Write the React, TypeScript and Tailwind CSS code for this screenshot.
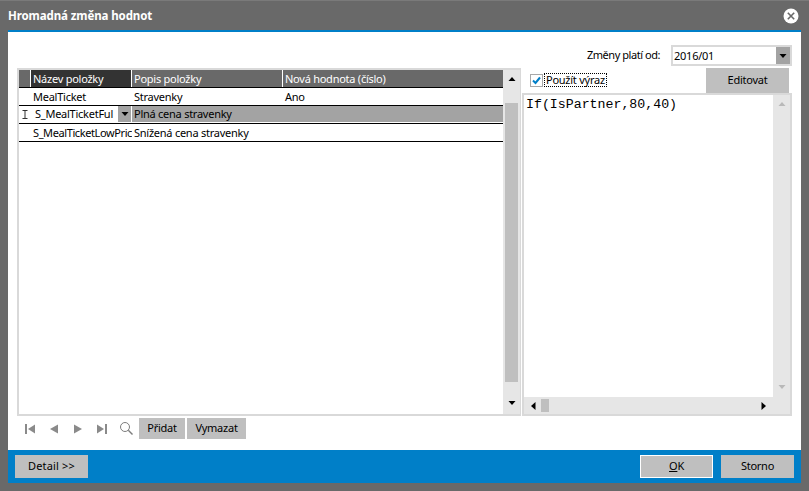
import React from "react";

const font = { fontFamily: '"Noto Sans", sans-serif' };

function Tri({ dir, color = "#000", size = 8 }: { dir: "up" | "down" | "left" | "right"; color?: string; size?: number }) {
  const pts = { up: "0.5,6 7.5,6 4,2", down: "0.5,2 7.5,2 4,6", left: "5.5,0 5.5,8 1,4", right: "1.5,0 1.5,8 6,4" }[dir];
  return (
    <svg width={size} height={size} viewBox="0 0 8 8" className="block shrink-0">
      <polygon points={pts} fill={color} />
    </svg>
  );
}

function Nav() {
  const c = "#8a8a8a";
  return (
    <div className="flex items-center h-[21px] pl-[8px] gap-[14px]">
      <svg width="10" height="10" viewBox="0 0 10 10"><rect x="0" y="0" width="2" height="10" fill={c} /><polygon points="10,0.5 10,9.5 3,5" fill={c} /></svg>
      <svg width="10" height="10" viewBox="0 0 10 10"><polygon points="9,0.5 9,9.5 1,5" fill={c} /></svg>
      <svg width="10" height="10" viewBox="0 0 10 10"><polygon points="1,0.5 1,9.5 9,5" fill={c} /></svg>
      <svg width="10" height="10" viewBox="0 0 10 10"><polygon points="0,0.5 0,9.5 7,5" fill={c} /><rect x="8" y="0" width="2" height="10" fill={c} /></svg>
      <svg width="13" height="13" viewBox="0 0 13 13" className="-ml-[1px]" fill="none" stroke="#7d7d7d"><circle cx="5" cy="5" r="4.5" /><path d="M8.3 8.3l4.2 4.2" strokeWidth="1.4" /></svg>
    </div>
  );
}

function Row({ a, b, c, selected }: { a: React.ReactNode; b: string; c?: string; selected?: boolean }) {
  return (
    <div className="flex h-[18px] border-b border-black leading-[17px] text-black">
      <div className="w-[12px] shrink-0 flex items-center justify-center">
        {selected && (
          <svg width="6" height="9" viewBox="0 0 6 9" fill="none" stroke="#333"><path d="M0.5 0.5h5M0.5 8.5h5M3 0.5v8" /></svg>
        )}
      </div>
      <div className="w-[101px] shrink-0 pl-[2px] overflow-hidden whitespace-nowrap">{a}</div>
      <div className={`w-[151px] shrink-0 pl-[2px] overflow-hidden whitespace-nowrap ${selected ? "bg-[#a3a3a3] h-[16px] leading-[16px]" : ""}`}>{b}</div>
      <div className={`flex-1 pl-[2px] ${selected ? "bg-[#a3a3a3] h-[16px]" : ""}`}>{c}</div>
    </div>
  );
}

export default function App() {
  return (
    <div className="w-[809px] h-[491px] bg-[#696969] flex flex-col overflow-hidden text-[11px] tracking-[-0.25px]" style={font}>
      <div className="h-[30px] shrink-0 flex items-center justify-between pl-[8px] pr-[10px] border-t border-[#7a7a7a]">
        <span className="text-white font-bold text-[11.5px] tracking-[-0.1px]">Hromadná změna hodnot</span>
        <svg width="16" height="16" viewBox="0 0 16 16">
          <circle cx="8" cy="8" r="7.5" fill="#fff" />
          <path d="M4.8 4.8l6.4 6.4M11.2 4.8l-6.4 6.4" stroke="#696969" strokeWidth="1.6" />
        </svg>
      </div>
      <div className="mx-[8px] flex-1 flex flex-col border-t-[2px] border-[#007fc8] bg-white min-h-0">
        <div className="flex-1 min-h-0 pl-[9px] pr-[9px] pt-[13px] flex flex-col">
          <div className="flex justify-end items-center h-[21px] gap-[11px] text-black">
            <span className="tracking-[-0.45px]">Změny platí od:</span>
            <div className="w-[121px] h-[21px] border-2 border-[#d9d9d9] flex items-center justify-between pl-[1px]">
              <span className="leading-none">2016/01</span>
              <div className="w-[14px] h-[17px] bg-[#a3a3a3] flex items-center justify-center"><Tri dir="down" /></div>
            </div>
          </div>
          <div className="flex mt-[2px]">
            <div className="flex flex-col w-[504px] shrink-0">
              <div className="h-[348px] border-2 border-r border-[#d9d9d9] flex">
                <div className="flex-1 flex flex-col min-w-0">
                  <div className="flex h-[18px] text-white leading-[17px] bg-[#696969] border-b border-black">
                    <div className="w-[12px] shrink-0 border-r border-white" />
                    <div className="w-[101px] shrink-0 pl-[2px] bg-[#333333] border-r border-white">Název položky</div>
                    <div className="w-[151px] shrink-0 pl-[2px] border-r border-white">Popis položky</div>
                    <div className="flex-1 pl-[2px]">Nová hodnota (číslo)</div>
                  </div>
                  <Row a="MealTicket" b="Stravenky" c="Ano" />
                  <Row
                    selected
                    a={
                      <div className="flex h-[16px] -ml-[2px] items-center leading-[16px]">
                        <span className="flex-1 pl-[4px]">S_MealTicketFul</span>
                        <span className="w-[13px] h-[16px] mr-[1px] bg-[#a3a3a3] flex items-center justify-center shrink-0"><Tri dir="down" /></span>
                      </div>
                    }
                    b="Plná cena stravenky"
                  />
                  <Row a={<span className="tracking-[-0.4px]">S_MealTicketLowPric</span>} b="Snížená cena stravenky" />
                </div>
                <div className="w-[17px] shrink-0 bg-[#e6e6e6] flex flex-col">
                  <div className="h-[18px] flex items-center justify-center"><Tri dir="up" /></div>
                  <div className="h-[15px]" />
                  <div className="h-[279px] mx-[2px] bg-[#bfbfbf]" />
                  <div className="flex-1" />
                  <div className="h-[22px] flex items-center justify-center"><Tri dir="down" /></div>
                </div>
              </div>
              <div className="flex items-center mt-[2px] h-[21px]">
                <Nav />
                <div className="flex gap-[2px] ml-[6px] text-black">
                  <div className="w-[46px] h-[21px] bg-[#bfbfbf] flex items-center justify-center">Přidat</div>
                  <div className="w-[59px] h-[21px] bg-[#bfbfbf] flex items-center justify-center">Vymazat</div>
                </div>
              </div>
            </div>
            <div className="w-[271px] flex flex-col pl-[1px]">
              <div className="flex items-center justify-between h-[25px] pl-[8px] pr-[3px] text-black">
                <div className="flex items-center gap-[1px] -mt-[1px]">
                  <div className="w-[13px] h-[13px] border border-[#a8a8a8] flex items-center justify-center">
                    <svg width="9" height="9" viewBox="0 0 9 9" fill="none"><path d="M1 4.5l2.5 2.5L8 1.5" stroke="#007fc8" strokeWidth="2" /></svg>
                  </div>
                  <span className="border border-dotted border-black px-[1px] h-[14px] leading-[12px]">Použít výraz</span>
                </div>
                <div className="w-[83px] h-[25px] bg-[#bfbfbf] flex items-center justify-center">Editovat</div>
              </div>
              <div className="h-[323px] border-2 border-[#d9d9d9] flex flex-col">
                <div className="flex-1 flex min-h-0">
                  <div className="flex-1 pl-[2px] pt-[2px] text-[13.25px] leading-[15px] tracking-normal text-black" style={{ fontFamily: '"Liberation Mono", monospace' }}>If(IsPartner,80,40)</div>
                  <div className="w-[17px] bg-[#e6e6e6] flex flex-col justify-between items-center pt-[5px] pb-[6px]">
                    <Tri dir="up" color="#b9b9b9" />
                    <Tri dir="down" color="#b9b9b9" />
                  </div>
                </div>
                <div className="h-[17px] bg-[#e6e6e6] flex items-center pl-[6px] pr-[22px]">
                  <Tri dir="left" />
                  <div className="w-[8px] h-[13px] bg-[#bfbfbf] ml-[3px]" />
                  <div className="flex-1" />
                  <Tri dir="right" />
                </div>
              </div>
            </div>
          </div>
        </div>
        <div className="h-[33px] shrink-0 bg-[#007fc8] flex items-center justify-between px-[7px] text-black">
          <div className="w-[73px] h-[23px] bg-[#bfbfbf] flex items-center justify-center tracking-[0.15px]">Detail &gt;&gt;</div>
          <div className="flex gap-[8px]">
            <div className="w-[73px] h-[23px] bg-[#bfbfbf] border border-white flex items-center justify-center"><span><u>O</u>K</span></div>
            <div className="w-[73px] h-[23px] bg-[#bfbfbf] flex items-center justify-center">Storno</div>
          </div>
        </div>
      </div>
      <div className="h-[8px] shrink-0" />
    </div>
  );
}
